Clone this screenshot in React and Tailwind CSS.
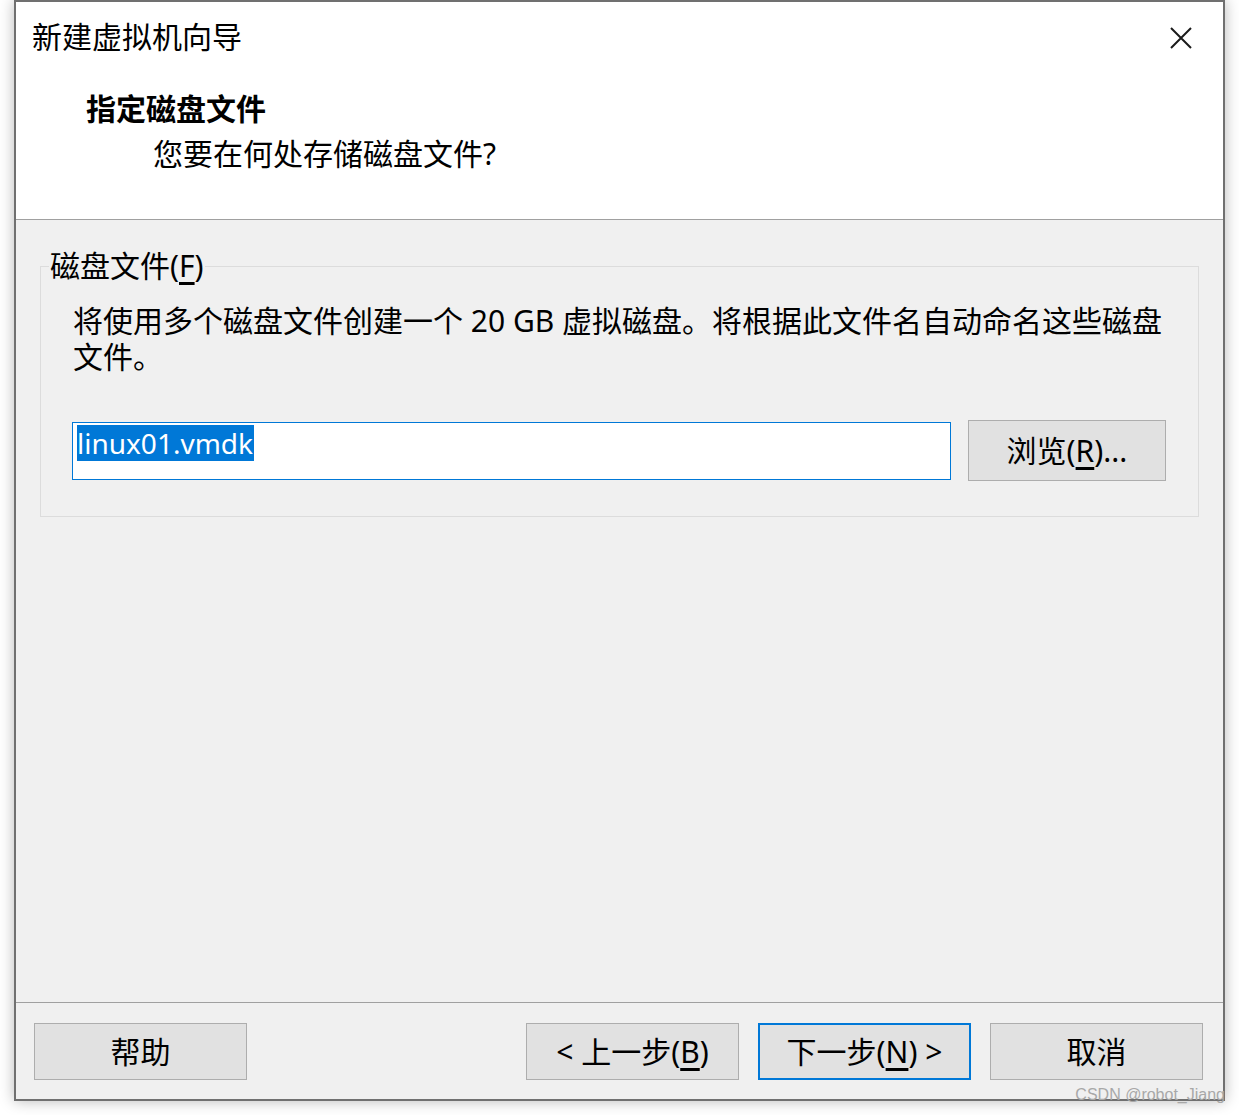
import React from 'react';

const font = "font-['Noto_Sans','Noto_Sans_CJK_SC',sans-serif]";

function DialogButton({ children, primary }) {
    return (
        <button
            className={
                'h-[57px] w-[213px] flex items-center justify-center bg-[#e1e1e1] text-[30px] leading-[36px] text-black ' +
                (primary ? 'border-2 border-[#0078d7]' : 'border border-[#adadad]')
            }
        >
            {children}
        </button>
    );
}

export default function App() {
    return (
        <div className={`${font} relative w-[1239px] h-[1115px] bg-white overflow-hidden`}>
            {/* Window */}
            <div className="ml-[14px] w-[1211px] h-[1101px] border-2 border-[#707070] flex flex-col bg-[#f0f0f0] shadow-[0_0_14px_rgba(0,0,0,0.28)]">
                {/* Header */}
                <div className="h-[218px] bg-white border-b border-[#a0a0a0] flex">
                    <div className="flex-1 pt-[17px] pl-[16px]">
                        <div className="text-[30px] leading-[36px] text-black">新建虚拟机向导</div>
                        <div className="mt-[36px] pl-[54px] text-[30px] leading-[36px] font-bold text-black">指定磁盘文件</div>
                        <div className="mt-[9px] pl-[121px] text-[30px] leading-[36px] text-black">您要在何处存储磁盘文件?</div>
                    </div>
                    <div className="pt-[24px] pr-[30px]">
                        <svg width="24" height="24" viewBox="0 0 24 24" className="text-[#1a1a1a]">
                            <path d="M2 2 L22 22 M22 2 L2 22" stroke="currentColor" strokeWidth="2" />
                        </svg>
                    </div>
                </div>

                {/* Body */}
                <div className="flex-1 pt-[28px] px-[24px]">
                    <fieldset className="border border-[#dcdcdc]">
                        <legend className="ml-[8px] px-[1px] text-[30px] leading-[36px] text-black">
                            磁盘文件(<span className="underline underline-offset-[5px]">F</span>)
                        </legend>
                        <div className="pl-[31px] pr-[32px] pt-[19px] pb-[35px]">
                            <div className="pl-[1px] text-[30px] leading-[36px] text-black">
                                <div className="whitespace-nowrap">将使用多个磁盘文件创建一个 20 GB 虚拟磁盘。将根据此文件名自动命名这些磁盘</div>
                                <div>文件。</div>
                            </div>
                            <div className="mt-[45px] flex items-center gap-[17px]">
                                <div className="w-[879px] h-[58px] bg-white border border-[#0078d7] pl-[4px] pt-[2px]">
                                    <span className="inline-block bg-[#0078d7] text-white text-[28px] leading-[36px] pr-[1px]">linux01.vmdk</span>
                                </div>
                                <button className="w-[198px] h-[61px] bg-[#e1e1e1] border border-[#adadad] text-[30px] leading-[36px] text-black flex items-center justify-center">
                                    浏览(<span className="underline underline-offset-[5px]">R</span>)...
                                </button>
                            </div>
                        </div>
                    </fieldset>
                </div>

                {/* Footer */}
                <div className="h-[97px] border-t border-[#a0a0a0] flex items-start pt-[20px] pl-[18px] pr-[20px]">
                    <DialogButton>帮助</DialogButton>
                    <div className="flex-1" />
                    <div className="flex gap-[19px]">
                        <DialogButton>
                            &lt; 上一步(<span className="underline underline-offset-[5px]">B</span>)
                        </DialogButton>
                        <DialogButton primary>
                            下一步(<span className="underline underline-offset-[5px]">N</span>) &gt;
                        </DialogButton>
                        <DialogButton>取消</DialogButton>
                    </div>
                </div>
            </div>

            {/* Watermark */}
            <div className="absolute right-[14px] top-[1086px] text-[16px] leading-[18px] text-[#a8a8a8] font-['Liberation_Sans',sans-serif]">
                CSDN @robot_Jiang
            </div>
        </div>
    );
}
